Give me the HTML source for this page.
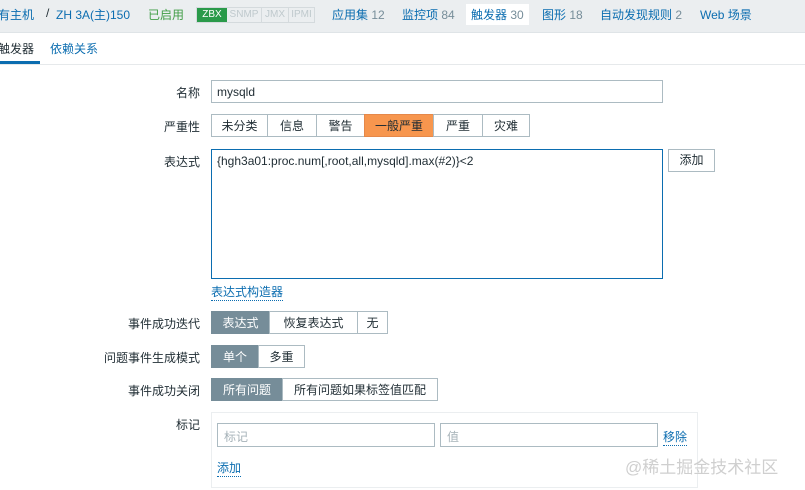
<!DOCTYPE html>
<html><head><meta charset="utf-8"><style>
*{box-sizing:border-box;margin:0;padding:0}
body{width:805px;height:490px;overflow:hidden;background:#fff;font-family:"Liberation Sans","Noto Sans CJK SC",sans-serif;font-size:12px;color:#1f2c33;position:relative}
.a{position:absolute;white-space:nowrap}
.top{position:absolute;left:0;top:0;width:805px;height:33px;background:#ebeef0;border-bottom:1px solid #dfe4e7}
.top span{position:absolute;top:6px;color:#0b6db0;font-size:12px}
.n{color:#768d99}
.lab{position:absolute;right:605px;text-align:right;white-space:nowrap}
.inp{position:absolute;border:1px solid #acbbc2;background:#fff}
.seg{position:absolute;display:flex;height:23px}
.seg div{border:1px solid #acbbc2;margin-left:-1px;display:flex;align-items:center;justify-content:center;background:#fff}
.seg .on{background:#768d99;color:#fff;border-color:#768d99}
.lnk{color:#0b6db0;border-bottom:1px dotted #0b6db0}
</style></head><body>
<div class="top">
<span style="left:-2px">有主机</span><span style="left:46px;color:#1f2c33">/</span><span style="left:56px">ZH 3A(主)150</span>
<span style="left:148px;color:#429e47">已启用</span>
<div class="a" style="left:196px;top:7px;height:16px;width:119px;border:1px solid #d4dadd;background:#ebeef0;font-size:10px;color:#bfc9cd;display:flex">
<div style="background:#2a9a4a;color:#fff;width:30px;text-align:center;line-height:14px">ZBX</div><div style="width:35px;text-align:center;line-height:14px;border-right:1px solid #d4dadd">SNMP</div><div style="width:27px;text-align:center;line-height:14px;border-right:1px solid #d4dadd">JMX</div><div style="width:25px;text-align:center;line-height:14px">IPMI</div></div>
<span style="left:332px">应用集 <i class="n" style="font-style:normal">12</i></span>
<span style="left:402px">监控项 <i class="n" style="font-style:normal">84</i></span>
<div class="a" style="left:466px;top:4px;width:63px;height:21px;background:#fff"></div>
<span style="left:471px">触发器 <i class="n" style="font-style:normal">30</i></span>
<span style="left:542px">图形 <i class="n" style="font-style:normal">18</i></span>
<span style="left:600px">自动发现规则 <i class="n" style="font-style:normal">2</i></span>
<span style="left:700px">Web 场景</span>
</div>
<div class="a" style="left:-2px;top:40px">触发器</div>
<div class="a" style="left:0;top:61px;width:40px;height:3px;background:#0b6db0"></div>
<div class="a" style="left:50px;top:40px;color:#0b6db0">依赖关系</div>
<div class="a" style="left:0;top:64px;width:805px;height:1px;background:#e6e9eb"></div>

<div class="lab" style="top:84px">名称</div>
<div class="inp" style="left:211px;top:80px;width:452px;height:23px;padding:4px 5px">mysqld</div>
<div class="lab" style="top:118px">严重性</div>
<div class="seg" style="left:212px;top:114px">
<div style="width:57px">未分类</div><div style="width:50px">信息</div><div style="width:49px">警告</div><div style="width:70px;background:#f7964e;border-color:#e5884a">一般严重</div><div style="width:50px">严重</div><div style="width:48px">灾难</div></div>
<div class="lab" style="top:153px">表达式</div>
<div class="inp" style="left:211px;top:149px;width:452px;height:130px;border-color:#0b6db0;padding:4px 5px">{hgh3a01:proc.num[,root,all,mysqld].max(#2)}&lt;2</div>
<div class="inp" style="left:668px;top:149px;width:47px;height:23px;text-align:center;line-height:21px">添加</div>
<div class="a lnk" style="left:211px;top:283px">表达式构造器</div>
<div class="lab" style="top:315px">事件成功迭代</div>
<div class="seg" style="left:212px;top:311px"><div class="on" style="width:59px">表达式</div><div style="width:89px">恢复表达式</div><div style="width:31px">无</div></div>
<div class="lab" style="top:349px">问题事件生成模式</div>
<div class="seg" style="left:212px;top:345px"><div class="on" style="width:48px">单个</div><div style="width:47px">多重</div></div>
<div class="lab" style="top:382px">事件成功关闭</div>
<div class="seg" style="left:212px;top:378px"><div class="on" style="width:72px">所有问题</div><div style="width:156px">所有问题如果标签值匹配</div></div>
<div class="lab" style="top:416px">标记</div>
<div class="a" style="left:211px;top:412px;width:487px;height:76px;border:1px solid #ebeef0"></div>
<div class="inp" style="left:217px;top:423px;width:218px;height:24px;padding:4px 6px;color:#a6b2b8">标记</div>
<div class="inp" style="left:440px;top:423px;width:218px;height:24px;padding:4px 6px;color:#a6b2b8">值</div>
<div class="a lnk" style="left:663px;top:428px">移除</div>
<div class="a lnk" style="left:217px;top:459px">添加</div>
<div class="a" style="left:625px;top:453px;font-size:17px;color:#cfcfcf">@稀土掘金技术社区</div>
</body></html>
